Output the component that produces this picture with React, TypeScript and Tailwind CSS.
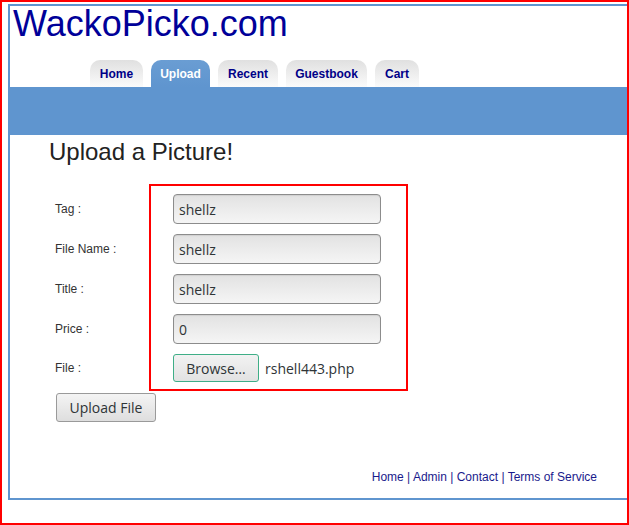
export default function App() {
  const tabs = [
    { name: 'Home', w: 'w-[53px]' },
    { name: 'Upload', w: 'w-[59px]' },
    { name: 'Recent', w: 'w-[60px]' },
    { name: 'Guestbook', w: 'w-[81px]' },
    { name: 'Cart', w: 'w-[44px]' },
  ];
  const fields = [
    { label: 'Tag :', value: 'shellz' },
    { label: 'File Name :', value: 'shellz' },
    { label: 'Title :', value: 'shellz' },
    { label: 'Price :', value: '0' },
  ];
  const footerLinks = ['Home', 'Admin', 'Contact', 'Terms of Service'];

  return (
    <div className="relative w-[629px] h-[525px] overflow-hidden bg-white border-2 border-[#ff0000] pl-[6px] pt-[2px] font-['Liberation_Sans',Arial,sans-serif]">
      <div className="flex flex-col w-[640px] h-[496px] border-2 border-r-0 border-[#5f95cf]">
        {/* Header */}
        <h1 className="pl-[3px] text-[36px] leading-[36px] text-[#000099]">WackoPicko.com</h1>

        {/* Tabs */}
        <nav className="flex gap-2 pl-[80px] mt-[18px]">
          {tabs.map((t) => (
            <a
              key={t.name}
              href="#"
              className={`${t.w} ${
                t.name === 'Upload'
                  ? 'flex items-center justify-center h-[27px] pt-[1px] rounded-t-[10px] bg-linear-to-b from-[#6a9dd3] to-[#5f95cf] text-[12px] font-bold text-white'
                  : 'flex items-center justify-center h-[27px] pt-[1px] rounded-t-[10px] bg-linear-to-b from-[#e0e0e0] to-[#fbfbfb] text-[12px] font-bold text-[#000088]'
              }`}
            >
              {t.name}
            </a>
          ))}
        </nav>
        <div className="h-[48px] bg-[#5f95cf]" />

        {/* Upload form */}
        <h2 className="mt-[3px] pl-[39px] text-[24px] leading-[28px] text-[#222]">Upload a Picture!</h2>
        <form className="mt-[28px] pl-[45px] flex flex-col gap-[10px]">
          {fields.map((f) => (
            <div key={f.label} className="flex items-center h-[30px]">
              <label className="w-[118px] text-[12px] text-[#333]">{f.label}</label>
              <input
                readOnly
                value={f.value}
                className="w-[208px] h-[30px] rounded-[4px] border border-[#8c8c8c] bg-linear-to-b from-[#e2e2e2] to-[#f5f5f5] px-[5px] font-['Open_Sans',sans-serif] text-[14px] text-[#2e3436] shadow-[inset_0_1px_1px_rgba(0,0,0,0.08)] outline-none"
              />
            </div>
          ))}
          <div className="flex items-center h-[28px]">
            <label className="w-[118px] text-[12px] text-[#333]">File :</label>
            <button
              type="button"
              className="w-[86px] h-[28px] rounded-[3px] border border-[#3fae87] bg-linear-to-b from-[#f2f2f2] to-[#e2e2e2] font-['Open_Sans',sans-serif] text-[14px] text-[#2e3436]"
            >
              Browse…
            </button>
            <span className="ml-[6px] font-['Open_Sans',sans-serif] text-[14px] text-[#2e3436]">rshell443.php</span>
          </div>
          <div className="mt-[1px] ml-[1px]">
            <button
              type="button"
              className="w-[100px] h-[29px] rounded-[3px] border border-[#9a9a9a] bg-linear-to-b from-[#f4f4f4] to-[#dedede] font-['Open_Sans',sans-serif] text-[14px] text-[#2e3436]"
            >
              Upload File
            </button>
          </div>
        </form>

        {/* Footer */}
        <footer className="mt-auto flex justify-end pr-[51px] pb-[14px] text-[12px] leading-[14px] text-[#1a1a8c]">
          {footerLinks.map((l, i) => (
            <span key={l} className="whitespace-pre">
              {i > 0 && ' | '}
              <a href="#">{l}</a>
            </span>
          ))}
        </footer>
      </div>

      {/* red annotation box */}
      <div className="absolute left-[147px] top-[182px] w-[259px] h-[207px] border-2 border-[#ff0000]" />
    </div>
  );
}
